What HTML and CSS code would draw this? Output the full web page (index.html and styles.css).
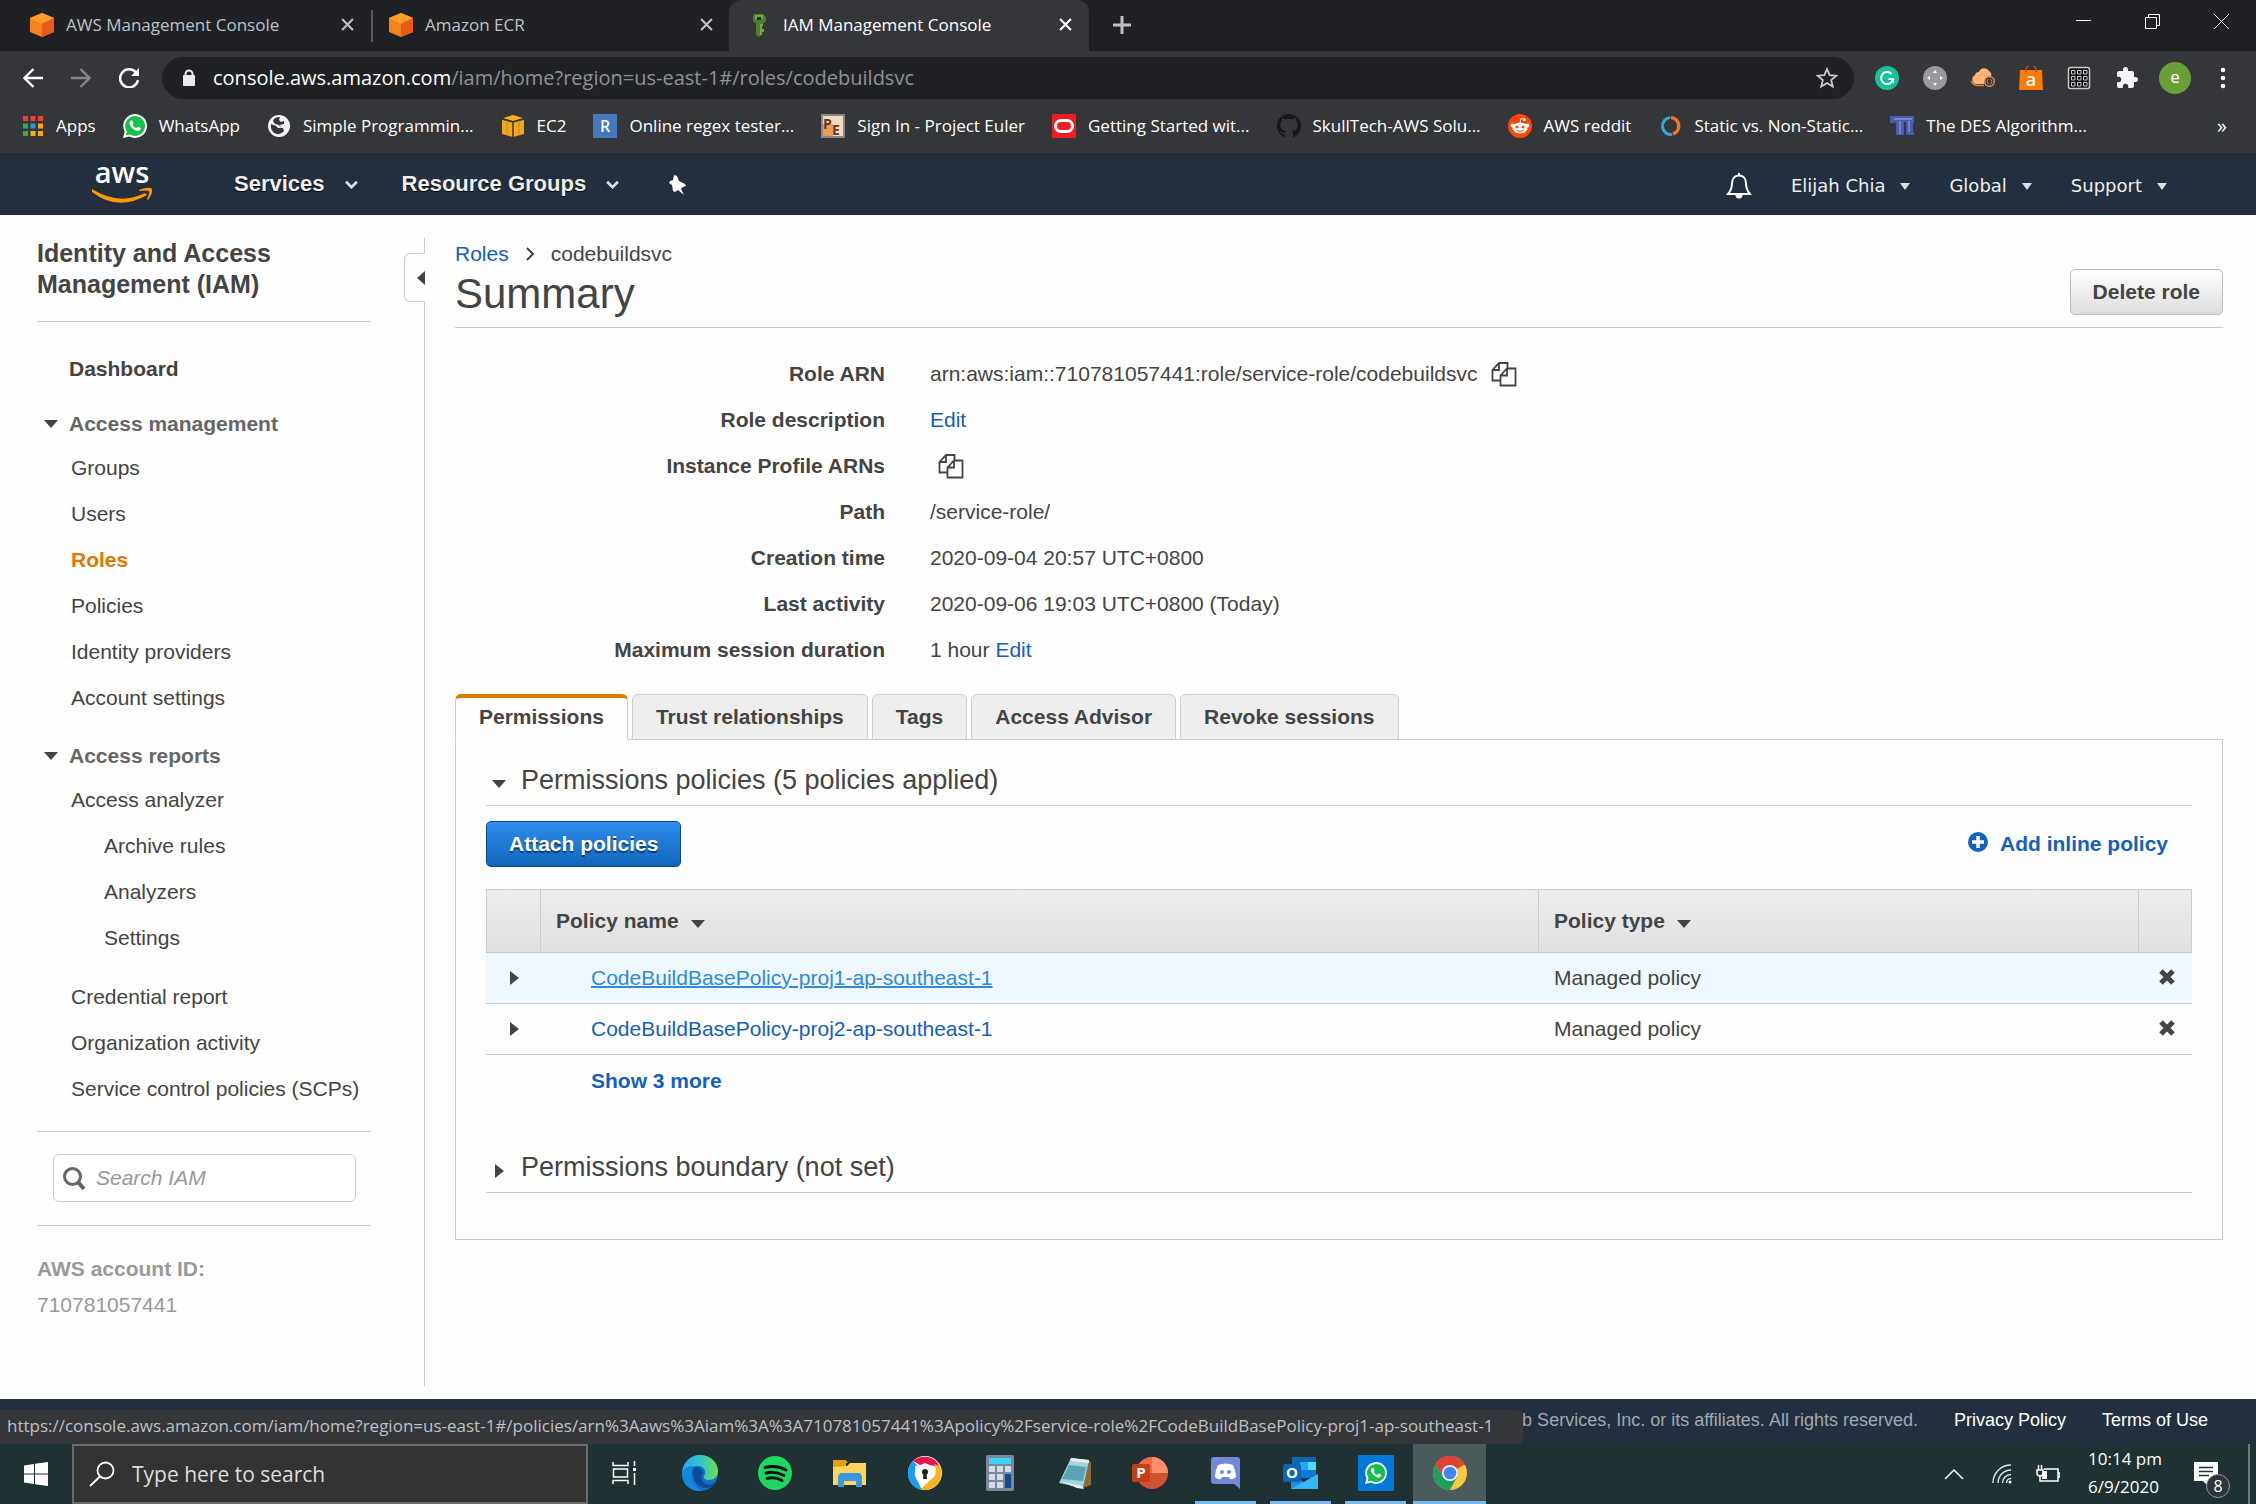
FILE: index.html
```html
<!DOCTYPE html>
<html lang="en">
<head>
<meta charset="utf-8">
<title>IAM Management Console</title>
<link rel="stylesheet" href="styles.css">
</head>
<body>
<svg class="defs" width="0" height="0" aria-hidden="true">
  <symbol id="cube" viewBox="0 0 24 24"><path d="M12 0l12 5v14l-12 5L0 19V5z" fill="#f58220"/><path d="M12 0l12 5-12 6L0 5z" fill="#ff9c2a"/><path d="M12 11l12-6v14l-12 5z" fill="#e8591c"/></symbol>
  <symbol id="x" viewBox="0 0 12 12"><path d="M1 1l10 10M11 1L1 11" stroke="currentColor" stroke-width="2" fill="none"/></symbol>
  <symbol id="copy" viewBox="0 0 26 26"><path d="M9.500 19.500H1.500V9L8 2h8.500v6M1.500 9H8V2M9.500 14.500L16 7.500h8.500v17h-15zM9.500 14.500H16v-7" fill="none" stroke="#444" stroke-width="1.800"/></symbol>
  <symbol id="chev" viewBox="0 0 14 10"><path d="M1 2l6 6 6-6" fill="none" stroke="#ddd" stroke-width="3"/></symbol>
  <symbol id="wa" viewBox="0 0 24 24"><path d="M0 24l1.700-6.200A11.900 11.900 0 1 1 6.300 22.400z" fill="#fff"/><path d="M2.800 21.200l1-3.800A9.900 9.900 0 1 1 7 20.500z" fill="#12c04b"/><path d="M8.300 6.300c-.6 0-1.900.9-1.900 2.800 0 2.400 4.500 8 8.300 8 2 0 3.200-1.300 3.200-2.800 0-.7-2.700-1.800-3.100-1.800-.5 0-1 1.600-1.600 1.600-.7 0-3.600-2.500-3.600-3.200 0-.5.8-1.100.8-1.700S9.200 6.300 8.300 6.300z" fill="#fff"/></symbol>
</svg>

<header class="browser">
  <div class="tabstrip">
    <div class="tab tab-first"><svg width="24" height="24"><use href="#cube"/></svg><span class="tab-title">AWS Management Console</span><button class="plain" aria-label="Close tab"><svg width="13" height="13"><use href="#x"/></svg></button></div>
    <div class="tab tab-second"><svg width="24" height="24"><use href="#cube"/></svg><span class="tab-title">Amazon ECR</span><button class="plain" aria-label="Close tab"><svg width="13" height="13"><use href="#x"/></svg></button></div>
    <div class="tab tab-active"><svg width="24" height="24" viewBox="0 0 24 24"><path d="M7 1h9l3 3v4l-3 3h-1v10l-3 3-3-2V11L6 8V4z" fill="#4f7f2b"/><path d="M13 11h3v2h-1v3h2v3h-2v2l-2 2zM8 2h8v4H8z" fill="#75a843"/><path d="M10 4h4v3h-4z" fill="#1e3312"/></svg><span class="tab-title">IAM Management Console</span><button class="plain" aria-label="Close tab"><svg width="13" height="13"><use href="#x"/></svg></button></div>
    <button class="plain new-tab" aria-label="New tab"><svg width="18" height="18" viewBox="0 0 18 18"><path d="M9 0v18M0 9h18" stroke="#bdc1c6" stroke-width="3"/></svg></button>
    <div class="window-controls">
      <button class="plain" aria-label="Minimize"><svg width="15" height="15" viewBox="0 0 15 15"><path d="M0 6.500h15" stroke="#fff"/></svg></button>
      <button class="plain" aria-label="Restore"><svg width="15" height="15" viewBox="0 0 15 15"><path d="M.5 3.500h11v11H.5zM3.500 3.500v-3h11v11h-3" fill="none" stroke="#fff"/></svg></button>
      <button class="plain" aria-label="Close"><svg width="15" height="15" viewBox="0 0 15 15"><path d="M0 0l15 15M15 0L0 15" stroke="#fff"/></svg></button>
    </div>
  </div>
  <div class="toolbar">
    <button class="plain nav-btn" aria-label="Back"><svg width="20" height="20" viewBox="0 0 20 20"><path d="M20 10H2M10.500 1L1.500 10l9 9" fill="none" stroke="#fff" stroke-width="2.300"/></svg></button>
    <button class="plain nav-btn" aria-label="Forward"><svg width="20" height="20" viewBox="0 0 20 20"><path d="M0 10h18M9.500 1l9 9-9 9" fill="none" stroke="#85868a" stroke-width="2.300"/></svg></button>
    <button class="plain nav-btn" aria-label="Reload"><svg width="20" height="20" viewBox="0 0 20 20"><path d="M17 4.500A9 9 0 1 0 19 12" fill="none" stroke="#fff" stroke-width="2.500"/><path d="M20 0v8h-8z" fill="#fff"/></svg></button>
    <div class="omnibox">
      <svg width="14" height="18" viewBox="0 0 14 18"><path d="M3.500 7V5a3.500 3.500 0 0 1 7 0v2" fill="none" stroke="#e8eaed" stroke-width="2"/><rect x="1" y="6" width="12" height="11" rx="1" fill="#e8eaed"/></svg>
      <div class="url"><span class="url-host">console.aws.amazon.com</span>/iam/home?region=us-east-1#/roles/codebuildsvc</div>
      <svg width="22" height="22" viewBox="0 0 22 22"><path d="M11 2l2.600 6.200 6.700.5-5.100 4.400 1.600 6.500L11 16.100l-5.800 3.500 1.600-6.500L1.700 8.700l6.700-.5z" fill="none" stroke="#c8cacd" stroke-width="1.800"/></svg>
    </div>
    <div class="extensions">
      <svg width="24" height="24" viewBox="0 0 24 24"><circle cx="12" cy="12" r="12" fill="#15c39a"/><path d="M16.500 8A6 6 0 1 0 18 13h-4.500M18 13v3.500" fill="none" stroke="#fff" stroke-width="2"/></svg>
      <svg width="24" height="24" viewBox="0 0 24 24"><circle cx="12" cy="12" r="12" fill="#9a9a9a"/><path d="M12 4l2 3h-4zM12 20l2-3h-4zM4 12l3-2v4zM20 12l-3-2v4z" fill="#fff"/></svg>
      <svg width="24" height="24" viewBox="0 0 24 24"><path d="M4 18a5 5 0 0 1 0-9 4 4 0 0 1 4-3 5.500 5.500 0 0 1 10-1 5 5 0 0 1 2 6q-7-1-7 7z" fill="#ffb27a"/><path d="M0 15q2 4.500 7 4.500h6" stroke="#f58220" stroke-width="1.500" fill="none"/><circle cx="18.500" cy="15.500" r="4.800" fill="#35363a" stroke="#e08a45" stroke-width="1.500"/><path d="M17.500 13l-1.500 2.500 1.500 2.500M19.500 13l1.500 2.500-1.500 2.500" stroke="#e08a45" fill="none"/></svg>
      <svg width="24" height="24" viewBox="0 0 24 24"><path d="M1 4h22l1 20H0z" fill="#ff7a00"/><path d="M7 6V4a5 5 0 0 1 10 0v2" fill="none" stroke="#b65200" stroke-width="1.600"/><text x="12" y="20" text-anchor="middle" class="glyph glyph-18">a</text></svg>
      <svg width="24" height="24" viewBox="0 0 24 24"><rect x="1.500" y="1.500" width="21" height="21" rx="2" fill="#111" stroke="#ccc" stroke-width="1.500"/><path d="M4.500 4.500h3.500v3.500H4.500zM10.500 4.500h3.500v3.500h-3.500zM16.500 4.500H20v3.500h-3.500zM4.500 10.500h3.500v3.500H4.500zM10.500 10.500h3.500v3.500h-3.500zM16.500 10.500H20v3.500h-3.500zM4.500 16.500h3.500V20H4.500zM10.500 16.500h3.500V20h-3.500zM16.500 16.500H20V20h-3.500z" fill="none" stroke="#ccc"/></svg>
      <svg width="24" height="24" viewBox="0 0 24 24"><path d="M20.500 11H19V7a2 2 0 0 0-2-2h-4V3.500a2.500 2.500 0 0 0-5 0V5H4a2 2 0 0 0-2 2v3.800h1.500a2.700 2.700 0 0 1 0 5.400H2V20a2 2 0 0 0 2 2h3.800v-1.500a2.700 2.700 0 0 1 5.400 0V22H17a2 2 0 0 0 2-2v-4h1.500a2.500 2.500 0 0 0 0-5z" fill="#f1f3f4"/></svg>
      <span class="avatar">e</span>
      <svg width="24" height="24" viewBox="0 0 24 24"><circle cx="12" cy="4" r="2.300" fill="#fff"/><circle cx="12" cy="12" r="2.300" fill="#fff"/><circle cx="12" cy="20" r="2.300" fill="#fff"/></svg>
    </div>
  </div>
  <nav class="bookmarks">
    <a href="#"><svg width="22" height="22" viewBox="0 0 22 22"><path d="M1 1h5v5H1zM8.500 1h5v5h-5zM16 1h5v5h-5z" fill="#ea4335"/><path d="M1 8.500h5v5H1zM1 16h5v5H1z" fill="#34a853"/><path d="M8.500 8.500h5v5h-5z" fill="#2196f3"/><path d="M16 8.500h5v5h-5zM8.500 16h5v5h-5zM16 16h5v5h-5z" fill="#f9ab00"/></svg>Apps</a>
    <a href="#"><svg width="24" height="24"><use href="#wa"/></svg>WhatsApp</a>
    <a href="#"><svg width="24" height="24" viewBox="0 0 24 24"><circle cx="12" cy="12" r="11" fill="#f1f3f4"/><path d="M13 3q-6 0-7 4l2 3 4 1 2 3h-3l-2-2-5-2q-1 5 3 9 6 3 10-2l-1-3h-2l-1-3 4-1V7l-3 1-2-2z" fill="#35363a"/></svg>Simple Programmin...</a>
    <a href="#"><svg width="24" height="24" viewBox="0 0 24 24"><path d="M1 5l11 3 11-3v15l-11 3L1 20z" fill="#f2a81d"/><path d="M2 4l10-3 10 3-10 3z" fill="#ffb400"/><path d="M1 5l11 3 11-3M12 8v15" stroke="#35363a" stroke-width="1.500" fill="none"/><path d="M6 8v12M18 8v12" stroke="#c58710"/></svg>EC2</a>
    <a href="#"><svg width="24" height="24" viewBox="0 0 24 24"><path d="M0 0h24v24H0z" fill="#4479bd"/><text x="12" y="18" text-anchor="middle" class="glyph glyph-16">R</text></svg>Online regex tester...</a>
    <a href="#"><svg width="24" height="24" viewBox="0 0 24 24"><path d="M1 1h22v22H1z" fill="#f5dcc0" stroke="#888" stroke-width="2"/><path d="M2 10h10v12H2z" fill="#ee9a50"/><text x="2" y="15" class="glyph glyph-pe">P</text><text x="11" y="21" class="glyph glyph-pe">E</text></svg>Sign In - Project Euler</a>
    <a href="#"><svg width="24" height="24" viewBox="0 0 24 24"><path d="M0 0h24v24H0z" fill="#ee1c25"/><rect x="3.500" y="6.500" width="17" height="11" rx="5.500" fill="none" stroke="#fff" stroke-width="3"/></svg>Getting Started wit...</a>
    <a href="#"><svg width="24" height="24" viewBox="0 0 24 24"><path d="M12 0a12 12 0 0 0-4 23.400V20c-4 1-4.500-2-5.500-2.500 2-.5 2.500 2 5.500 1 .2-.8.500-1.200 1-1.600-4.500-.6-5.500-3-5.500-6 0-1.500.5-2.500 1.300-3.400C4.500 6 4.500 5 5 4c1.500 0 2.500.8 3.500 1.400a12 12 0 0 1 7 0C16.500 4.800 17.500 4 19 4c.5 1 .5 2 .2 3.500.8.900 1.300 1.900 1.300 3.400 0 3-1 5.400-5.500 6 1 .8 1 2 1 3v3.500A12 12 0 0 0 12 0z" fill="#191717"/></svg>SkullTech-AWS Solu...</a>
    <a href="#"><svg width="24" height="24" viewBox="0 0 24 24"><circle cx="12" cy="12" r="12" fill="#ff4500"/><ellipse cx="12" cy="14" rx="7.500" ry="5.500" fill="#fff"/><circle cx="4.500" cy="11.500" r="2" fill="#fff"/><circle cx="19.500" cy="11.500" r="2" fill="#fff"/><circle cx="16.500" cy="5.500" r="1.500" fill="#fff"/><path d="M12 9l1-4.500 3.500 1" stroke="#fff" fill="none"/><circle cx="9" cy="13" r="1.500" fill="#ff4500"/><circle cx="15" cy="13" r="1.500" fill="#ff4500"/><path d="M9 16.500q3 2 6 0" stroke="#ff4500" fill="none"/></svg>AWS reddit</a>
    <a href="#"><svg width="24" height="24" viewBox="0 0 24 24"><path d="M12 3.500a8.500 8.500 0 1 0 2 17" fill="none" stroke="#35a8c9" stroke-width="3"/><path d="M13 3.500a8.500 8.500 0 0 1 2 16.500" fill="none" stroke="#f47421" stroke-width="3.500"/></svg>Static vs. Non-Static...</a>
    <a href="#"><svg width="24" height="24" viewBox="0 0 24 24"><path d="M0 2h24v7h-1v9h1v3h-8V8h-2v13H6V8H5v1H0z" fill="#4a5cae"/><path d="M4 5h18M10 7v13M19 7v11" stroke="#8c98d4" stroke-width="1.300"/></svg>The DES Algorithm...</a>
    <span class="more">»</span>
  </nav>
</header>

<div class="aws-nav">
  <a href="#" aria-label="AWS home" class="logo"><svg width="62" height="60" viewBox="0 -14 62 60"><text x="31" y="14" text-anchor="middle" class="logo-text">aws</text><path d="M1 20q27 17 53 4l2 2q-29 17-55-3z" fill="#ff9900"/><path d="M48 21q11-4 13-1 1 4-4 11l-1-1q3-6 2-8-2-1-10 0z" fill="#ff9900"/></svg></a>
  <button class="plain menu-main">Services <svg width="13" height="9"><use href="#chev"/></svg></button>
  <button class="plain menu-main">Resource Groups <svg width="13" height="9"><use href="#chev"/></svg></button>
  <button class="plain pin" aria-label="Pin shortcuts"><svg width="20" height="20" viewBox="0 0 20 20"><path d="M6 0l3 1 2 5 6 3 1 2-3 1-2 2 3 6-6-5-3 2-2-1-1-6-3-2 1-2 3-1z" fill="#fff"/></svg></button>
  <div class="aws-right">
    <button class="plain bell" aria-label="Notifications"><svg width="26" height="26" viewBox="0 0 26 26"><path d="M13 2.500c-5 0-7 4-7 8 0 6-2 8-4 10.500h22c-2-2.500-4-4.500-4-10.500 0-4-2-8-7-8z" fill="none" stroke="#fff" stroke-width="2"/><path d="M9.500 22h7a3.500 3.500 0 0 1-7 0zM12 0h2v3h-2z" fill="#fff"/></svg></button>
    <button class="plain menu-side">Elijah Chia<i class="tri-down light"></i></button>
    <button class="plain menu-side">Global<i class="tri-down light"></i></button>
    <button class="plain menu-side">Support<i class="tri-down light"></i></button>
  </div>
</div>

<div class="content">
  <aside class="sidebar">
    <button class="plain collapse" aria-label="Collapse navigation"><i class="tri-left"></i></button>
    <h2 class="side-title">Identity and Access<br>Management (IAM)</h2>
    <nav class="side-nav">
      <a href="#" class="dash">Dashboard</a>
      <h3 class="group"><i class="tri-down"></i>Access management</h3>
      <a href="#">Groups</a>
      <a href="#">Users</a>
      <a href="#" class="current">Roles</a>
      <a href="#">Policies</a>
      <a href="#">Identity providers</a>
      <a href="#">Account settings</a>
      <h3 class="group second"><i class="tri-down"></i>Access reports</h3>
      <a href="#">Access analyzer</a>
      <div class="sub">
        <a href="#">Archive rules</a>
        <a href="#">Analyzers</a>
        <a href="#">Settings</a>
      </div>
      <a href="#">Credential report</a>
      <a href="#">Organization activity</a>
      <a href="#">Service control policies (SCPs)</a>
    </nav>
    <div class="side-search">
      <label class="search-box"><svg width="24" height="24" viewBox="0 0 24 24"><circle cx="10.500" cy="10.500" r="8" fill="none" stroke="#666" stroke-width="3"/><path d="M16 16l6 7" stroke="#666" stroke-width="4"/></svg><input type="text" placeholder="Search IAM" aria-label="Search IAM"></label>
    </div>
    <div class="account"><strong>AWS account ID:</strong><span>710781057441</span></div>
  </aside>

  <main class="main">
    <div class="page-head">
      <div>
        <nav class="crumbs"><a href="#">Roles</a><svg width="10" height="14" viewBox="0 0 10 14"><path d="M2 1l6 6-6 6" fill="none" stroke="#444" stroke-width="2"/></svg><span>codebuildsvc</span></nav>
        <h1>Summary</h1>
      </div>
      <button class="btn">Delete role</button>
    </div>
    <dl class="facts">
      <dt>Role ARN</dt><dd>arn:aws:iam::710781057441:role/service-role/codebuildsvc<button class="plain copy" aria-label="Copy role ARN"><svg width="26" height="26"><use href="#copy"/></svg></button></dd>
      <dt>Role description</dt><dd><a href="#">Edit</a></dd>
      <dt>Instance Profile ARNs</dt><dd><button class="plain copy alone" aria-label="Copy instance profile ARNs"><svg width="26" height="26"><use href="#copy"/></svg></button></dd>
      <dt>Path</dt><dd>/service-role/</dd>
      <dt>Creation time</dt><dd>2020-09-04 20:57 UTC+0800</dd>
      <dt>Last activity</dt><dd>2020-09-06 19:03 UTC+0800 (Today)</dd>
      <dt>Maximum session duration</dt><dd>1 hour&nbsp;<a href="#">Edit</a></dd>
    </dl>
    <div class="tabs" role="tablist">
      <button role="tab" class="active" aria-selected="true">Permissions</button>
      <button role="tab">Trust relationships</button>
      <button role="tab">Tags</button>
      <button role="tab">Access Advisor</button>
      <button role="tab">Revoke sessions</button>
    </div>
    <section class="panel">
      <h2 class="fold"><i class="tri-down"></i>Permissions policies (5 policies applied)</h2>
      <div class="actions">
        <button class="btn primary">Attach policies</button>
        <a href="#" class="add"><svg width="20" height="24" viewBox="0 0 20 24"><circle cx="10" cy="10" r="10" fill="#1166bb"/><path d="M10 4v12M4 10h12" stroke="#fff" stroke-width="3.500"/></svg>Add inline policy</a>
      </div>
      <table>
        <colgroup><col class="c-fold"><col><col class="c-type"><col class="c-del"></colgroup>
        <thead><tr><th></th><th>Policy name<i class="tri-down"></i></th><th>Policy type<i class="tri-down"></i></th><th></th></tr></thead>
        <tbody>
          <tr class="hover"><td><i class="tri-right"></i></td><td class="name"><a href="#">CodeBuildBasePolicy-proj1-ap-southeast-1</a></td><td>Managed policy</td><td class="del"><button class="plain" aria-label="Detach policy"><svg width="16" height="16" viewBox="0 0 16 16"><path d="M2 2l12 12M14 2L2 14" stroke="#444" stroke-width="5"/></svg></button></td></tr>
          <tr><td><i class="tri-right"></i></td><td class="name"><a href="#">CodeBuildBasePolicy-proj2-ap-southeast-1</a></td><td>Managed policy</td><td class="del"><button class="plain" aria-label="Detach policy"><svg width="16" height="16" viewBox="0 0 16 16"><path d="M2 2l12 12M14 2L2 14" stroke="#444" stroke-width="5"/></svg></button></td></tr>
        </tbody>
      </table>
      <a href="#" class="show-more">Show 3 more</a>
      <h2 class="fold"><i class="tri-right"></i>Permissions boundary (not set)</h2>
    </section>
  </main>
</div>

<footer class="aws-footer">
  <svg class="foot-icon" width="20" height="20" viewBox="0 0 20 20"><circle cx="10" cy="10" r="9" fill="#fff"/></svg>
  <svg class="foot-icon far" width="20" height="20" viewBox="0 0 20 20"><circle cx="10" cy="10" r="9" fill="#fff"/></svg>
  <span class="legal">b Services, Inc. or its affiliates. All rights reserved.</span>
  <a href="#">Privacy Policy</a>
  <a href="#">Terms of Use</a>
  <div class="status">https://console.aws.amazon.com/iam/home?region=us-east-1#/policies/arn%3Aaws%3Aiam%3A%3A710781057441%3Apolicy%2Fservice-role%2FCodeBuildBasePolicy-proj1-ap-southeast-1</div>
</footer>

<div class="taskbar">
  <button class="plain start" aria-label="Start"><svg width="24" height="24" viewBox="0 0 24 24"><path d="M0 3.500l10-1.500v9.500H0zM11 1.800L24 0v11.500H11zM0 12.500h10V22L0 20.500zM11 12.500h13V24l-13-1.800z" fill="#fff"/></svg></button>
  <label class="win-search"><svg width="26" height="26" viewBox="0 0 26 26"><circle cx="16.500" cy="9.500" r="8" fill="none" stroke="#fff" stroke-width="1.800"/><path d="M11 15.500L1 25" stroke="#fff" stroke-width="1.800"/></svg><input type="text" placeholder="Type here to search" aria-label="Type here to search"></label>
  <div class="apps">
    <button class="plain" aria-label="Task view"><svg width="26" height="24" viewBox="0 0 26 24"><path d="M1 1v3.500h15V1M1 23v-3.500h15V23M1.500 8h14v8h-14zM22.500 0v5M22.500 12v12" fill="none" stroke="#fff" stroke-width="1.500"/><path d="M21 7h3v3h-3z" fill="#fff"/></svg></button>
    <button class="plain" aria-label="Edge"><svg width="36" height="36" viewBox="0 0 36 36"><defs><linearGradient id="e1" x1="0" x2="1"><stop offset="0" stop-color="#2aa7ea"/><stop offset=".5" stop-color="#2fc4d0"/><stop offset="1" stop-color="#6be04c"/></linearGradient></defs><circle cx="18" cy="18" r="18" fill="#0f6fc9"/><path d="M0 18C1 7 9 0 18 0c11 0 18 8 18 16 0 6-4 9-9 9-4 0-6-2-5-4 3-4 0-10-6-10C9 11 2 14 0 20z" fill="url(#e1)"/><path d="M12 13c-3 8 1 18 11 20 4 0 8-2 10-5-9 5-17-2-12-10-1-4-5-7-9-5z" fill="#114a93"/><path d="M0 19c1-6 6-8 11-8-4 8-1 20 9 25C8 37 0 29 0 19z" fill="#1486dd"/></svg></button>
    <button class="plain" aria-label="Spotify"><svg width="34" height="34" viewBox="0 0 34 34"><circle cx="17" cy="17" r="17" fill="#1ed760"/><path d="M7 11.500q11-3 21 2.500M8 17q9-2.500 18 2.500M9 22.500q8-2 15 2" fill="none" stroke="#111" stroke-width="3" stroke-linecap="round"/></svg></button>
    <button class="plain" aria-label="File Explorer"><svg width="34" height="30" viewBox="0 0 34 30"><path d="M0 2h13l2 3h-2v6H0z" fill="#e0a010"/><path d="M0 9l14-1 3-3h16v22H0z" fill="#ffd55e"/><path d="M5 29V18l2-3h20l2 3v11h-6v-6H11v6z" fill="#3b97e0"/></svg></button>
    <button class="plain" aria-label="Secure Browser"><svg width="34" height="34" viewBox="0 0 34 34"><circle cx="17" cy="17" r="17" fill="#fff"/><path d="M5 5A17 17 0 0 1 32 11L17 12z" fill="#e8174a"/><path d="M32 10a17 17 0 0 1-20 23.500L27 20q2-8-1-12z" fill="#f9b31c"/><path d="M5 5a17 17 0 0 0 9 29L7 20q-1-7 3-10z" fill="#1b9cf0"/><path d="M17 7q6 3 10 3-1 13-10 18Q8 23 7 10q5 0 10-3z" fill="#fff"/><circle cx="17" cy="16" r="3" fill="#222"/><path d="M15.500 17h3l.5 6h-4z" fill="#222"/></svg></button>
    <button class="plain" aria-label="Calculator"><svg width="28" height="36" viewBox="0 0 28 36"><rect width="28" height="36" rx="2" fill="#7c8799"/><path d="M3 3h22v6H3z" fill="#3dd3f7"/><path d="M3 11h6v6H3zM11 11h6v6h-6zM19 11h6v6h-6zM3 19h6v6H3zM11 19h6v6h-6zM3 27h6v6H3zM11 27h6v6h-6z" fill="#d5dbe6"/><path d="M19 19h6v14h-6z" fill="#12498f"/></svg></button>
    <button class="plain" aria-label="Notepad"><svg width="34" height="34" viewBox="0 0 34 34"><path d="M30 4l3 2v23l-8 3z" fill="#8a6a35"/><path d="M13 2l18 2-6 28L1 27z" fill="#9fd5de"/><path d="M11 9l17 2-3 14L4 23z" fill="#5aa3b4"/><path d="M2 25l22 5 2 3-7-1z" fill="#e8f4f6"/><path d="M13 2l18 2v3L12 5z" fill="#eee"/></svg></button>
    <button class="plain" aria-label="PowerPoint"><svg width="36" height="34" viewBox="0 0 36 34"><circle cx="20" cy="17" r="16" fill="#d35230"/><path d="M20 1a16 16 0 0 1 16 16H20z" fill="#ff8f6b"/><path d="M20 1A16 16 0 0 0 4 17h16z" fill="#ed6c47"/><rect y="8" width="18" height="18" rx="2" fill="#c43e1c"/><text x="9" y="22" text-anchor="middle" class="glyph glyph-15">P</text></svg></button>
    <button class="plain running" aria-label="Discord"><svg width="30" height="32" viewBox="0 0 30 32"><path d="M3 0h23q3 0 3 3v29l-6-5H3q-3 0-3-3V3q0-3 3-3z" fill="#7289da"/><path d="M7 8q8-3 15 0 3 6 3 12-3 3-6 2l-1-2h-7l-1 2q-3 1-6-2 0-6 3-12z" fill="#fff"/><circle cx="11" cy="15" r="2" fill="#7289da"/><circle cx="18" cy="15" r="2" fill="#7289da"/></svg></button>
    <button class="plain running" aria-label="Outlook"><svg width="36" height="34" viewBox="0 0 36 34"><path d="M9 1h24v20H9z" fill="#1066b5"/><path d="M17 6h8v8h-8z" fill="#28a8ea"/><path d="M25 6h8v8h-8z" fill="#50d9ff"/><path d="M17 14h16v8H17z" fill="#0f78d4"/><path d="M8 18l13 8 14-8v15H8z" fill="#1a8ee5"/><path d="M8 33l27-15v15z" fill="#35b8f1"/><rect y="8" width="18" height="18" rx="2" fill="#0a64b8"/><text x="9" y="22" text-anchor="middle" class="glyph glyph-15">O</text></svg></button>
    <button class="plain running" aria-label="WhatsApp"><svg width="36" height="36" viewBox="0 0 36 36"><path d="M0 0h36v36H0z" fill="#0078d7"/><svg x="7" y="7" width="22" height="22"><use href="#wa"/></svg></svg></button>
    <button class="plain running focused" aria-label="Chrome"><svg width="34" height="34" viewBox="0 0 34 34"><circle cx="17" cy="17" r="17" fill="#fbc93d"/><path d="M17 17L2.300 8.500a17 17 0 0 1 29.400 0z" fill="#dc4437"/><path d="M17 9h15a17 17 0 0 0-29.700-.5L10 21z" fill="#dc4437"/><path d="M2.300 8.500A17 17 0 0 0 17 34l7-13-14 0z" fill="#1aa15f"/><circle cx="17" cy="17" r="8" fill="#f1f1f1"/><circle cx="17" cy="17" r="6.300" fill="#4285f4"/></svg></button>
  </div>
  <div class="tray">
    <svg width="20" height="12" viewBox="0 0 20 12"><path d="M1 11l9-9 9 9" fill="none" stroke="#fff" stroke-width="1.500"/></svg>
    <svg width="20" height="20" viewBox="0 0 20 20"><path d="M1 19A18 18 0 0 1 19 1M6 19A13 13 0 0 1 19 6M10.500 19a8.500 8.500 0 0 1 8.500-8.500M14.500 19a4.500 4.500 0 0 1 4.500-4.500" fill="none" stroke="#dfe4e4" stroke-width="1.400"/><circle cx="18" cy="18" r="1.500" fill="#fff"/></svg>
    <svg class="battery" width="24" height="18" viewBox="0 0 24 18"><path d="M8 4h14v12H4v-5M22 8h2v4h-2M1 5h6v3a3 3 0 0 1-6 0zM2.500 0v5M5.500 0v5M4 11v5" fill="none" stroke="#fff" stroke-width="1.500"/><path d="M7 6h4v8H6z" fill="#fff"/></svg>
    <div class="clock"><span>10:14 pm</span><span>6/9/2020</span></div>
    <div class="notes"><svg width="24" height="24" viewBox="0 0 24 24"><path d="M0 0h24v19H14v5l-5-5H0z" fill="#fff"/><path d="M5 5.500h14M5 9.500h14M5 13.500h10" stroke="#1f3133" stroke-width="1.300"/></svg><span class="badge">8</span></div>
  </div>
</div>
</body>
</html>
```
FILE: styles.css
```css
* { box-sizing: border-box; }
body {
  margin: 0;
  min-height: 100vh;
  display: flex;
  flex-direction: column;
  font: 21px/46px "Liberation Sans", Arial, sans-serif;
  color: #444;
  background: #fefefe;
}
a { color: #1560bd; text-decoration: none; }
h1, h2, h3, dl, dd { margin: 0; font-weight: normal; }
svg { flex: none; display: block; }
.defs { position: absolute; }
.plain {
  border: 0; padding: 0; background: none; color: inherit;
  font: inherit; display: flex; align-items: center; justify-content: center;
}

/* browser window */
.browser, .status, .taskbar { font-family: "Open Sans", "Noto Sans", sans-serif; }
.browser { background: #35363a; color: #fff; font-size: 17px; line-height: 24px; border-bottom: 2px solid #2a2b2e; }
.tabstrip { display: flex; height: 51px; background: #202124; color: #bdc1c6; }
.tab { display: flex; align-items: center; gap: 12px; padding-bottom: 2px; }
.tab-title { flex: 1; white-space: nowrap; }
.tab-first { width: 373px; padding-left: 30px; padding-right: 17px; border-right: 2px solid #202124; border-image: linear-gradient(#202124 11px, #5a5b5e 11px, #5a5b5e 41px, #202124 41px) 1; }
.tab-second { width: 356px; padding-left: 16px; padding-right: 16px; }
.tab-active { width: 360px; padding-left: 18px; padding-right: 17px; background: #35363a; color: #fff; border-radius: 12px 12px 0 0; }
.new-tab { width: 66px; padding-bottom: 2px; }
.window-controls { margin-left: auto; display: flex; gap: 54px; align-items: center; padding: 0 27px 9px 0; }
.toolbar { display: flex; align-items: center; padding: 6px 21px 6px 9px; }
.nav-btn { width: 48px; height: 42px; }
.omnibox {
  flex: 1; height: 42px; margin: 0 21px 0 9px; padding: 0 16px 0 20px;
  display: flex; align-items: center; gap: 17px;
  background: #202124; border-radius: 21px;
}
.url { flex: 1; font-size: 20px; color: #8f9296; white-space: nowrap; }
.url-host { color: #fff; }
.extensions { display: flex; align-items: center; gap: 24px; }
.avatar { width: 32px; height: 32px; margin: 0 -4px; border-radius: 50%; background: #689f38; text-align: center; line-height: 30px; }
.glyph { fill: #fff; font-family: "Open Sans", sans-serif; font-weight: 600; }
.glyph-18 { font-size: 18px; }
.glyph-16 { font-size: 16px; }
.glyph-15 { font-size: 15px; font-weight: 700; }
.glyph-pe { font-size: 14px; font-weight: 700; fill: #5a3a28; }
.bookmarks { display: flex; align-items: center; height: 48px; gap: 27px; padding: 0 29px 6px 22px; }
.bookmarks a { display: flex; align-items: center; gap: 12px; color: #fff; white-space: nowrap; }
.more { margin-left: auto; font-size: 20px; }

/* AWS header */
.aws-nav { display: flex; align-items: center; height: 60px; padding: 0 89px 0 91px; background: #232f3e; color: #eee; }
.logo { margin-right: 81px; }
.logo-text { font: 600 29px "Open Sans", sans-serif; fill: #fff; }
.menu-main { font-size: 22px; font-weight: bold; gap: 20px; margin-right: 44px; padding-bottom: 2px; text-shadow: 0 1px 1px #000; }
.pin { margin-left: 5px; }
.aws-right { margin-left: auto; display: flex; align-items: center; gap: 39px; font: 18px/24px "DejaVu Sans", Verdana, sans-serif; text-shadow: 0 1px 1px #000; padding-top: 2px; }
.menu-side { gap: 15px; }

.tri-down { width: 0; height: 0; border: 7px solid transparent; border-top: 8px solid #444; border-bottom: 0; display: inline-block; }
.tri-right { width: 0; height: 0; border: 7px solid transparent; border-left: 9px solid #444; border-right: 0; display: inline-block; }
.tri-left { width: 0; height: 0; border: 7px solid transparent; border-right: 8px solid #444; border-left: 0; }
.tri-down.light { border-width: 7px 5px 0; border-top-color: #ddd; }

/* page */
.content { flex: 1; display: flex; padding: 23px 33px 13px 0; }
.sidebar { position: relative; width: 425px; flex: none; padding: 0 53px 0 37px; border-right: 1px solid #ccc; }
.collapse {
  position: absolute; top: 15px; right: -1px; width: 21px; height: 49px; justify-content: flex-end;
  background: #fefefe; border: 1px solid #ccc; border-right: 0; border-radius: 6px 0 0 6px;
}
.side-title { font-size: 25px; font-weight: bold; line-height: 31px; padding-bottom: 21px; border-bottom: 1px solid #ccc; }
.side-nav { display: flex; flex-direction: column; padding: 24px 0 19px 34px; border-bottom: 1px solid #ccc; white-space: nowrap; }
.side-nav a { color: #444; }
.side-nav .dash { font-weight: bold; margin: 0 0 11px -2px; }
.side-nav .current { color: #e07700; font-weight: bold; }
.group { display: flex; align-items: center; gap: 11px; margin-left: -27px; font-size: 21px; font-weight: bold; line-height: 42px; color: #666; }
.second { margin-top: 14px; }
.sub { display: flex; flex-direction: column; padding: 0 0 13px 33px; }
.side-search { padding: 22px 15px 23px 16px; border-bottom: 1px solid #ccc; }
.search-box { display: flex; align-items: center; gap: 10px; height: 48px; padding: 0 8px; border: 1px solid #ccc; border-radius: 6px; background: #fff; }
input { flex: 1; min-width: 0; border: 0; padding: 0; outline: 0; background: none; font: inherit; color: inherit; }
.search-box input::placeholder { color: #999; font-style: italic; opacity: 1; }
.account { display: flex; flex-direction: column; padding-top: 25px; line-height: 36px; color: #999; }

.main { flex: 1; min-width: 0; padding-left: 30px; }
.page-head { display: flex; justify-content: space-between; align-items: flex-end; padding-bottom: 9px; border-bottom: 1px solid #ccc; }
.crumbs { display: flex; align-items: center; gap: 16px; line-height: 32px; }
h1 { font-size: 42px; line-height: 48px; }
.btn {
  height: 46px; padding: 0 22px; font: bold 21px "Liberation Sans", Arial, sans-serif; color: #444;
  border: 1px solid #bbb; border-radius: 5px; background: linear-gradient(#fff, #ddd);
}
.page-head .btn { margin-bottom: 3px; }
.primary { color: #fff; border-color: #0a4a8c; background: linear-gradient(#2e8ded, #1166bb); text-shadow: 0 2px 1px #0a3a6c; }
.facts { display: grid; grid-template-columns: 430px 1fr; column-gap: 45px; padding: 23px 0 21px; }
.facts dt { font-weight: bold; text-align: right; }
.facts dd { display: flex; align-items: center; height: 46px; }
.copy { margin-left: 14px; }
.alone { margin-left: 8px; }
.tabs { display: flex; gap: 4px; height: 46px; margin-bottom: -1px; }
.tabs button {
  padding: 0 23px; font: bold 21px "Liberation Sans", Arial, sans-serif; color: #444;
  background: #eee; border: 1px solid #ccc; border-radius: 6px 6px 0 0;
}
.tabs .active { position: relative; padding-bottom: 4px; background: #fefefe; border-top: 4px solid #e07700; border-bottom-color: #fefefe; }
.panel { border: 1px solid #ccc; padding: 0 30px 46px; }
.fold { display: flex; align-items: center; gap: 15px; padding: 16px 0 0 6px; font-size: 27px; line-height: 49px; border-bottom: 1px solid #ccc; }
.fold i { margin-top: 6px; }
.fold .tri-right { margin-left: 3px; margin-right: 2px; }
.actions { display: flex; justify-content: space-between; align-items: center; padding: 15px 24px 22px 0; }
.add { display: flex; align-items: center; gap: 12px; font-weight: bold; }
table { width: 100%; border-spacing: 0; table-layout: fixed; line-height: 50px; }
.c-fold, .c-del { width: 54px; }
.c-type { width: 600px; }
th { height: 64px; padding: 0 0 0 15px; text-align: left; border: solid #ccc; border-width: 1px 0 1px 1px; background: linear-gradient(#eee, #dfdfdf); }
th:last-child { border-right-width: 1px; }
th .tri-down { margin-left: 12px; }
td { height: 51px; padding: 0 0 0 16px; border-bottom: 1px solid #ccc; }
td:first-child { padding-left: 24px; }
td.name { padding-left: 51px; }
td.del { padding: 0 0 3px 21px; }
.hover td { background: #eff8ff; }
.hover a { color: #2e8ae0; text-decoration: underline; text-decoration-thickness: 2px; }
.show-more { display: block; padding: 0 0 21px 105px; line-height: 51px; font-weight: bold; }

/* footer */
.aws-footer { position: relative; display: flex; align-items: center; gap: 36px; height: 45px; padding: 0 48px 3px 45px; background: #232f3e; color: #9fa8b0; font-size: 18px; line-height: 24px; white-space: nowrap; }
.aws-footer a { color: #fff; }
.foot-icon { align-self: flex-start; margin-top: 10px; }
.far { margin-left: 110px; }
.legal { margin-left: auto; }
.status {
  position: absolute; left: 0; bottom: 0; height: 34px; padding: 0 12px 0 7px; width: 1523px;
  background: #35363a; color: #bdc1c6; font-size: 17px; line-height: 32px; border-radius: 0 6px 0 0; overflow: hidden;
}

/* taskbar */
.taskbar { display: flex; height: 60px; background: #1f3133; color: #fff; font-size: 17px; line-height: 28px; }
.start { width: 72px; }
.win-search { display: flex; align-items: center; gap: 17px; width: 516px; padding: 0 15px; background: #333; border: 2px solid #6a6a6a; font-size: 21px; color: #ddd; }
.win-search input::placeholder { color: #ddd; opacity: 1; }
.apps { display: flex; gap: 1px; }
.apps button { width: 74px; border-bottom: 3px solid transparent; }
.apps .running { width: 61px; margin: 0 6px 0 7px; border-bottom-color: #76b9ed; }
.apps .focused { width: 73px; margin: 0; background: #4b5b5c; }
.tray { margin-left: auto; display: flex; align-items: center; gap: 28px; padding-right: 30px; margin-right: 6px; border-right: 2px solid #6c7879; }
.battery { margin-left: -4px; }
.clock { display: flex; flex-direction: column; margin-right: 4px; padding-bottom: 2px; }
.notes { position: relative; }
.badge { position: absolute; left: 12px; top: 12px; width: 24px; height: 24px; border-radius: 50%; border: 1px solid #999; background: #2f3536; font-size: 16px; line-height: 22px; text-align: center; }
```
